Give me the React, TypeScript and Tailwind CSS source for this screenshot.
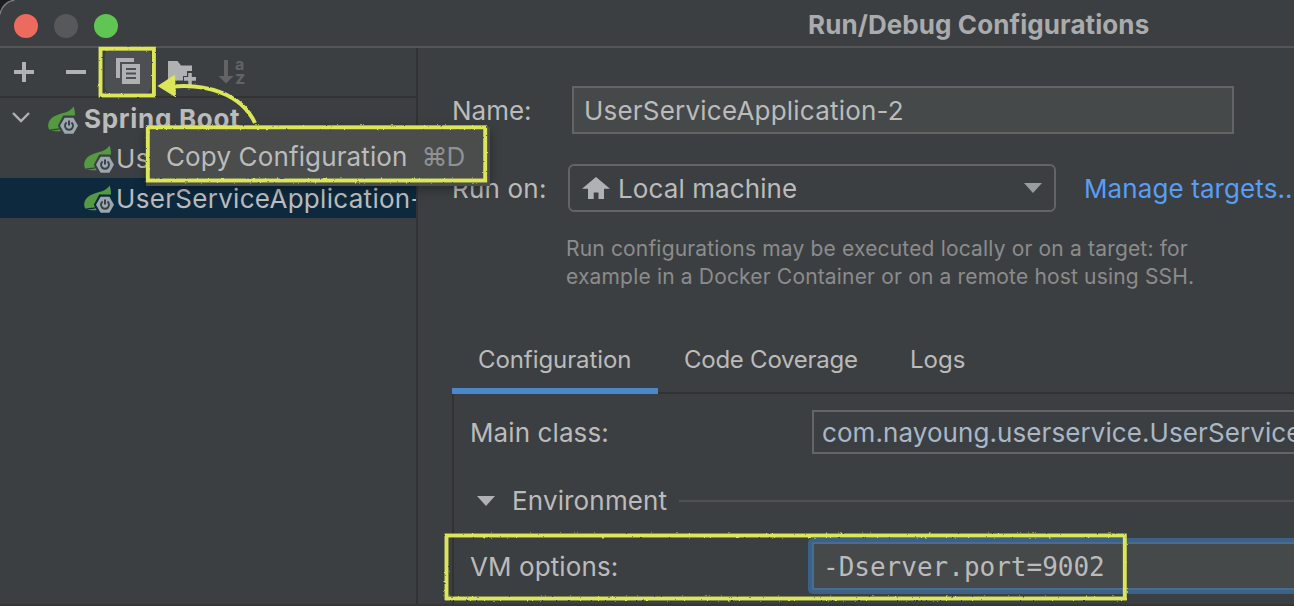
import type { ReactNode } from 'react';

function PlusIcon() {
  return (
    <svg width="20" height="20" viewBox="0 0 20 20" fill="#afb1b3">
      <path d="M8 0h4v8h8v4h-8v8H8v-8H0V8h8z" />
    </svg>
  );
}

function MinusIcon() {
  return (
    <svg width="20" height="20" viewBox="0 0 20 20" fill="#afb1b3">
      <path d="M0 8h20v4H0z" />
    </svg>
  );
}

function CopyIcon() {
  return (
    <svg width="24" height="26" viewBox="0 0 24 26">
      <path d="M0 0h18v4H4v16H0z" fill="#afb1b3" />
      <path d="M6 6h18v20H6z" fill="#afb1b3" />
      <path d="M10 10h10v2H10zM10 14.500h10v2H10zM10 19h10v2H10z" fill="#4c5052" />
    </svg>
  );
}

function NewFolderIcon() {
  return (
    <svg width="28" height="24" viewBox="0 0 28 24" fill="#afb1b3">
      <path d="M0 0h9.5L13 4.5h11V10h-5v5h-4v4.5H0z" />
      <path d="M20.2 12h3.6v4h4.2v3.8h-4.2V24h-3.6v-4.2H16V16h4.2z" />
    </svg>
  );
}

function SortIcon() {
  return (
    <svg width="28" height="26" viewBox="0 0 28 26" fill="#616365">
      <path d="M6 1h4v16h5.500L8 24.500L.5 17H6z" />
      <text x="17" y="11" className="font-['Inter',sans-serif] text-[16px] leading-none font-bold">a</text>
      <text x="17" y="25" className="font-['Inter',sans-serif] text-[18px] leading-none font-bold">z</text>
    </svg>
  );
}

function SpringIcon({ bg }: { bg: string }) {
  return (
    <svg className="shrink-0" width="32" height="28" viewBox="0 0 32 28">
      <path
        d="M26.500 0.500C23.500 5.500 18 6.500 11.500 8.500C4.500 10.600 1 15 1.200 20C1.300 21.500 1.700 22.800 2.600 23.700C8 22.500 12 23 14 21C17 18 20 15 27.500 13C28.500 9 28 4 26.500 0.500Z"
        fill="#549a40"
      />
      <path d="M4 24.300C8 24.500 11 24 14.500 22.500L15.500 25C11 25.500 7 25.500 4 24.300Z" fill="#549a40" />
      <path d="M16.200 9.500h11.600l5.400 10.200-5.400 10.200H16.200L10.800 19.700z" fill={bg} />
      <path d="M17.600 11.700h8.800L31 19.700l-4.600 8h-8.800L13 19.700z" fill="#9aa7b0" />
      <path d="M19.600 16.600a4 4 0 1 0 4.800 0" fill="none" stroke="#3b4043" strokeWidth="1.900" />
      <path d="M22 14.400v5.200" stroke="#3b4043" strokeWidth="2" />
    </svg>
  );
}

function HomeIcon() {
  return (
    <svg width="28" height="23" viewBox="0 0 28 23">
      <path d="M14 0L28 11.800H22V22H16.500V15.500H11.700V22H6V11.800H0Z" fill="#afb1b3" />
    </svg>
  );
}

function Triangle({ color }: { color: string }) {
  return (
    <svg width="18" height="10" viewBox="0 0 18 10">
      <path d="M0 0h18L9 10z" fill={color} />
    </svg>
  );
}

function TreeRow({ selected, children }: { selected?: boolean; children: ReactNode }) {
  return (
    <div className={`flex h-10 items-center pl-[83px] whitespace-nowrap ${selected ? 'bg-[#0d293e]' : ''}`}>
      <span className="mt-[1px] flex">
        <SpringIcon bg={selected ? '#0d293e' : '#3c3f41'} />
      </span>
      <span className="ml-[1px] pt-[2px] tracking-[0.3px]">{children}</span>
    </div>
  );
}

function Sidebar() {
  return (
    <aside className="w-[418px] shrink-0 overflow-hidden border-r-2 border-[#323232]">
      <div className="flex h-[50px] items-center border-b-2 border-[#323232] pl-[14px]">
        <PlusIcon />
        <span className="ml-8"><MinusIcon /></span>
        <span className="-mt-[2px] ml-[19px] flex h-11 w-[46px] items-center justify-center rounded-[6px] bg-[#4c5052]">
          <CopyIcon />
        </span>
        <span className="mt-[1px] ml-[17px]"><NewFolderIcon /></span>
        <span className="ml-[22px]"><SortIcon /></span>
      </div>
      <div className="flex h-10 items-center">
        <svg className="-mt-[3px] ml-3" width="18" height="12" viewBox="0 0 18 12">
          <path d="M1 2L9 10L17 2" fill="none" stroke="#afb1b3" strokeWidth="2.400" />
        </svg>
        <span className="mt-[3px] ml-[17px] flex"><SpringIcon bg="#3c3f41" /></span>
        <span className="ml-[5px] pt-[2px] font-bold tracking-[0.7px]">Spring Boot</span>
      </div>
      <TreeRow>UserServiceApplication</TreeRow>
      <TreeRow selected>UserServiceApplication-2</TreeRow>
    </aside>
  );
}

function Annotations() {
  return (
    <svg className="pointer-events-none absolute inset-0" width="1294" height="606" viewBox="0 0 1294 606">
      <defs>
        <filter id="chalk" filterUnits="userSpaceOnUse" x="0" y="0" width="1294" height="606">
          <feTurbulence type="fractalNoise" baseFrequency="0.35" numOctaves="2" seed="4" result="noise" />
          <feDisplacementMap in="SourceGraphic" in2="noise" scale="2.200" xChannelSelector="R" yChannelSelector="G" />
        </filter>
      </defs>
      <g filter="url(#chalk)" fill="none" stroke="#dbe757" strokeWidth="3.900">
        <rect x="100.500" y="48.700" width="53.400" height="46.800" />
        <rect x="147.800" y="127.300" width="337.400" height="53.200" />
        <rect x="446.500" y="535.500" width="678.300" height="63" />
        <path d="M172 86.500C205 83.500 241 93 255 123" />
        <path d="M157.500 86L175 74.500L176 97.500Z" fill="#dbe757" stroke="none" />
      </g>
    </svg>
  );
}

export default function App() {
  return (
    <div className="relative flex h-[606px] w-[1294px] flex-col overflow-hidden bg-[#3c3f41] font-['Inter','Noto_Sans',sans-serif] text-[26px] leading-8 text-[#bbbbbb]">
      <header className="flex h-12 shrink-0 items-center border-b-2 border-[#555555] pl-[14px]">
        <div className="mt-[6px] flex gap-4">
          <span className="size-6 rounded-full bg-[#ed6a5e]" />
          <span className="size-6 rounded-full bg-[#565859]" />
          <span className="size-6 rounded-full bg-[#61c554]" />
        </div>
        <h1 className="mt-1 ml-[690px] font-bold tracking-[0.09px] whitespace-nowrap text-[#a9abad]">
          Run/Debug Configurations
        </h1>
      </header>

      <div className="flex min-h-0 flex-1">
        <Sidebar />
        <main className="min-w-0 flex-1 overflow-hidden whitespace-nowrap">
          <div className="mt-[38px] flex items-center pl-[34px]">
            <span className="w-[120px] shrink-0 pt-[2px]">Name:</span>
            <div className="flex h-12 w-[662px] shrink-0 items-center border-2 border-[#646464] bg-[#45494a] pt-[2px] pl-[10px] tracking-[0.21px]">
              UserServiceApplication-2
            </div>
          </div>

          <div className="mt-[30px] flex items-center pl-[34px]">
            <span className="w-[116px] shrink-0 pt-[1px] tracking-[0.2px]">Run on:</span>
            <div className="flex h-12 w-[488px] shrink-0 items-center rounded-[6px] border-2 border-[#646464] px-3">
              <HomeIcon />
              <span className="ml-2 flex-1 pt-[2px] tracking-[0.1px]">Local machine</span>
              <Triangle color="#9a9da0" />
            </div>
            <a className="ml-7 shrink-0 pt-[1px] tracking-[0.1px] text-[#589df6]">Manage targets...</a>
          </div>

          <p className="mt-[23px] ml-[148px] text-[21px] leading-7 tracking-[0.17px] text-[#8c8c8c]">
            Run configurations may be executed locally or on a target: for
            <br />
            example in a Docker Container or on a remote host using SSH.
          </p>

          <div className="mt-[33px] ml-[34px] flex h-[70px] text-[24px]">
            <div className="flex w-[206px] items-center border-b-6 border-[#4a88c7] pt-2 pl-[26px] tracking-[-0.08px]">
              Configuration
            </div>
            <div className="flex w-[226px] items-center border-b-2 border-[#323232] pt-1 pl-[26px] tracking-[-0.25px]">
              Code Coverage
            </div>
            <div className="flex flex-1 items-center border-b-2 border-[#323232] pt-1 pl-[26px]">Logs</div>
          </div>

          <div className="ml-[34px] h-[212px] border-l-2 border-[#323232]">
            <div className="flex items-center pt-4 pl-4">
              <span className="w-[342px] shrink-0 pt-[2px] tracking-[0.1px]">Main class:</span>
              <div className="flex h-11 min-w-0 flex-1 items-center overflow-hidden border-2 border-r-0 border-[#646464] pl-2 tracking-[0.08px] text-[#a9b7c6]">
                <span className="pt-[2px]">com.nayoung.userservice.UserServiceApplication</span>
              </div>
            </div>
            <div className="mt-[27px] flex h-10 items-center pl-[23px]">
              <Triangle color="#afb1b3" />
              <span className="ml-[17px] tracking-[0.15px]">Environment</span>
              <span className="ml-3 h-[2px] flex-1 bg-[#515151]" />
            </div>
            <div className="mt-[17px] flex items-center pl-4">
              <span className="w-[338px] shrink-0 pt-[2px] tracking-[0.1px]">VM options:</span>
              <div className="h-14 flex-1 rounded-l-[5px] border-4 border-r-0 border-[#3d6185]">
                <div className="flex h-full items-center border-2 border-r-0 border-[#466d94] bg-[#45494a] pt-[2px] pl-[9px] font-['DejaVu_Sans_Mono',monospace]">
                  -Dserver.port=9002
                </div>
              </div>
            </div>
          </div>
        </main>
      </div>

      <div className="absolute top-[604px] left-0 h-[2px] w-full bg-[#353637]" />

      <div className="absolute top-[127px] left-[146px] flex h-[59px] w-[344px] items-center bg-[#4b4d4d] pl-5 whitespace-nowrap shadow-[0_3px_10px_rgba(0,0,0,0.35)]">
        <span className="tracking-[0.13px]">Copy Configuration</span>
        <span className="ml-[14px] tracking-[-1px] text-[#8f9192]">⌘D</span>
      </div>

      <Annotations />

      <svg className="absolute top-0 left-0" width="16" height="16" viewBox="0 0 16 16">
        <path d="M0 0H14C6 1 1 6 0 14Z" fill="#1c1d1e" />
        <path d="M0 14.500C1 7 7 1 14.500 0.300" fill="none" stroke="#77797b" strokeWidth="1.500" />
      </svg>
    </div>
  );
}
